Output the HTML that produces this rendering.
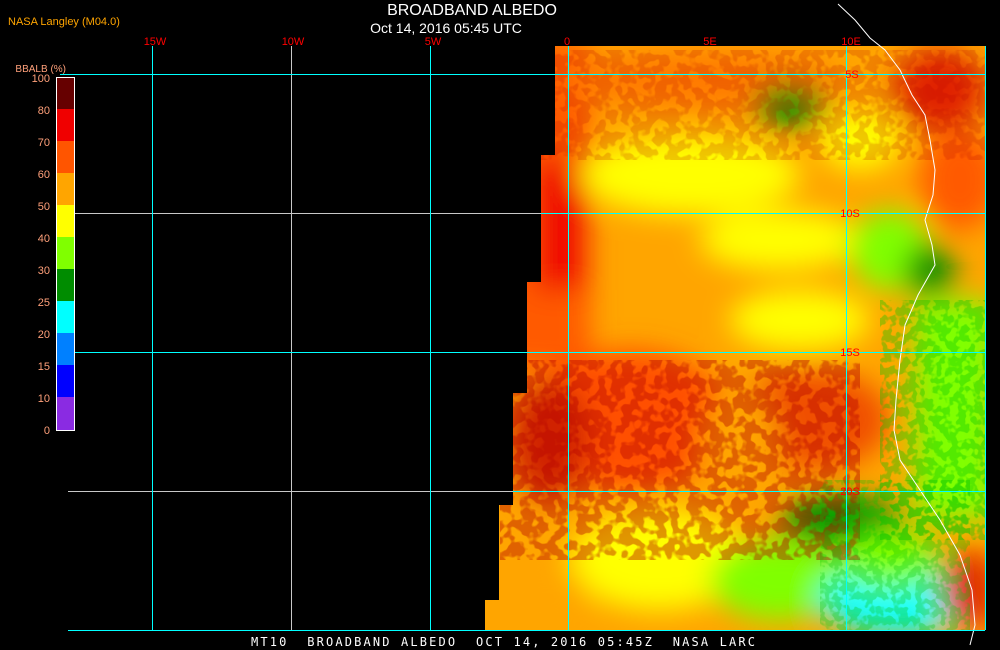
<!DOCTYPE html>
<html><head><meta charset="utf-8"><style>
html,body{margin:0;padding:0;background:#000;width:1000px;height:650px;overflow:hidden}
svg{display:block}
text{font-family:"Liberation Sans",sans-serif}
.m{font-family:"DejaVu Sans Mono","Liberation Mono",monospace}
</style></head><body>
<svg width="1000" height="650" viewBox="0 0 1000 650" xmlns="http://www.w3.org/2000/svg">
<defs>
<clipPath id="c"><polygon points="555,46 985,46 985,630 485,630 485,600 499,600 499,505 513,505 513,393 527,393 527,282 541,282 541,155 555,155"/></clipPath>
<filter id="b" x="-50%" y="-50%" width="200%" height="200%"><feGaussianBlur stdDeviation="14"/></filter>
<filter id="n" x="0" y="0" width="100%" height="100%">
<feTurbulence type="fractalNoise" baseFrequency="0.09" numOctaves="2" seed="3"/>
<feColorMatrix type="matrix" values="0 0 0 0 0.45  0 0 0 0 0  0 0 0 0 0  0 0 0 -9 5.2"/>
</filter>
<filter id="g" x="0" y="0" width="100%" height="100%">
<feTurbulence type="fractalNoise" baseFrequency="0.12" numOctaves="2" seed="8"/>
<feColorMatrix type="matrix" values="0 0 0 0 0  0 0 0 0 0.55  0 0 0 0 0  0 0 0 -10 5.6"/>
</filter>
</defs>
<rect width="1000" height="650" fill="#000"/>
<g clip-path="url(#c)">
<rect x="480" y="40" width="510" height="600" fill="#ffa500"/>
<g filter="url(#b)">
<rect x="480" y="40" width="110" height="330" fill="#ff5a00"/>
<rect x="535" y="160" width="50" height="130" fill="#f00000"/>
<ellipse cx="700" cy="80" rx="140" ry="28" fill="#ff7a00"/>
<ellipse cx="690" cy="175" rx="110" ry="40" fill="#ffff00"/>
<ellipse cx="780" cy="240" rx="80" ry="30" fill="#ffff00"/>
<ellipse cx="800" cy="320" rx="70" ry="30" fill="#ffff00"/>
<ellipse cx="790" cy="105" rx="35" ry="22" fill="#009000"/>
<ellipse cx="860" cy="140" rx="40" ry="30" fill="#ffff00"/>
<ellipse cx="960" cy="180" rx="40" ry="50" fill="#ff5a00"/>
<ellipse cx="940" cy="90" rx="45" ry="40" fill="#e02000"/>
<ellipse cx="890" cy="250" rx="40" ry="40" fill="#80ff00"/>
<ellipse cx="930" cy="270" rx="25" ry="25" fill="#009000"/>
<rect x="915" y="300" width="80" height="220" fill="#80ff00"/>
<ellipse cx="630" cy="420" rx="100" ry="70" fill="#ff5000"/>
<ellipse cx="550" cy="440" rx="40" ry="60" fill="#d02000"/>
<ellipse cx="810" cy="420" rx="80" ry="50" fill="#f05000"/>
<ellipse cx="740" cy="450" rx="40" ry="60" fill="#ffa500"/>
<ellipse cx="660" cy="560" rx="90" ry="50" fill="#ffff00"/>
<ellipse cx="780" cy="580" rx="70" ry="40" fill="#80ff00"/>
<ellipse cx="840" cy="520" rx="60" ry="25" fill="#009000"/>
<ellipse cx="900" cy="600" rx="80" ry="35" fill="#00ffff"/>
<ellipse cx="890" cy="560" rx="50" ry="30" fill="#80ff00"/>
<ellipse cx="540" cy="600" rx="50" ry="40" fill="#ffa500"/>
<ellipse cx="970" cy="590" rx="30" ry="40" fill="#e03000"/>
</g>
<rect x="500" y="360" width="360" height="200" filter="url(#n)" opacity="0.4"/>
<rect x="880" y="300" width="105" height="240" filter="url(#g)" opacity="0.35"/>
<rect x="820" y="480" width="150" height="150" filter="url(#g)" opacity="0.3"/>
<rect x="540" y="50" width="445" height="110" filter="url(#n)" opacity="0.2"/>
</g>
<polyline points="838,4 855,20 870,38 885,50 900,70 912,95 925,115 930,140 935,170 933,195 925,220 932,245 935,265 918,295 905,325 900,360 896,400 894,430 900,460 920,490 940,520 960,555 972,590 975,625 970,645" fill="none" stroke="#fff" stroke-width="1"/>
<g stroke-width="1" fill="none">
<line x1="75" y1="213.5" x2="541" y2="213.5" stroke="#c8c8c8"/>
<line x1="68" y1="491.5" x2="513" y2="491.5" stroke="#c8c8c8"/>
<line x1="291.5" y1="46" x2="291.5" y2="630" stroke="#c8c8c8"/>
<line x1="541" y1="213.5" x2="985" y2="213.5" stroke="#00ffff"/>
<line x1="513" y1="491.5" x2="985" y2="491.5" stroke="#00ffff"/>
<line x1="60" y1="74.5" x2="985" y2="74.5" stroke="#00ffff"/>
<line x1="75" y1="352.5" x2="985" y2="352.5" stroke="#00ffff"/>
<line x1="68" y1="630.5" x2="985" y2="630.5" stroke="#00ffff"/>
<line x1="152.5" y1="46" x2="152.5" y2="630" stroke="#00ffff"/>
<line x1="430.5" y1="46" x2="430.5" y2="630" stroke="#00ffff"/>
<line x1="568.5" y1="46" x2="568.5" y2="630" stroke="#00ffff"/>
<line x1="846.5" y1="46" x2="846.5" y2="630" stroke="#00ffff"/>
<line x1="985.5" y1="46" x2="985.5" y2="630" stroke="#00ffff"/>
</g>
<rect x="57" y="77" width="17" height="32" fill="#660000"/>
<rect x="57" y="109" width="17" height="32" fill="#f00000"/>
<rect x="57" y="141" width="17" height="32" fill="#ff5500"/>
<rect x="57" y="173" width="17" height="32" fill="#ffa500"/>
<rect x="57" y="205" width="17" height="32" fill="#ffff00"/>
<rect x="57" y="237" width="17" height="32" fill="#80ff00"/>
<rect x="57" y="269" width="17" height="32" fill="#008c00"/>
<rect x="57" y="301" width="17" height="32" fill="#00ffff"/>
<rect x="57" y="333" width="17" height="32" fill="#0080ff"/>
<rect x="57" y="365" width="17" height="32" fill="#0000ff"/>
<rect x="57" y="397" width="17" height="33" fill="#8a2be2"/>
<rect x="56.5" y="77.5" width="18" height="353" fill="none" stroke="#fff"/>
<g fill="#ffa07a" font-size="11" text-anchor="end">
<text x="50" y="82">100</text><text x="50" y="114">80</text><text x="50" y="146">70</text><text x="50" y="178">60</text><text x="50" y="210">50</text><text x="50" y="242">40</text><text x="50" y="274">30</text><text x="50" y="306">25</text><text x="50" y="338">20</text><text x="50" y="370">15</text><text x="50" y="402">10</text><text x="50" y="434">0</text>
<text x="66" y="72" text-anchor="end" font-size="10">BBALB (%)</text>
</g>
<text x="8" y="25" fill="#ffa500" font-size="11">NASA Langley (M04.0)</text>
<text x="472" y="15" fill="#fff" font-size="16" text-anchor="middle">BROADBAND ALBEDO</text>
<text x="446" y="33" fill="#fff" font-size="14" text-anchor="middle">Oct 14, 2016 05:45 UTC</text>
<g fill="#ff0000" font-size="11" class="m" text-anchor="middle">
<text x="155" y="45">15W</text><text x="293" y="45">10W</text><text x="433" y="45">5W</text><text x="567" y="45">0</text><text x="710" y="45">5E</text><text x="851" y="45">10E</text>
<text x="852" y="78">5S</text><text x="850" y="217">10S</text><text x="850" y="356">15S</text><text x="850" y="495">20S</text>
</g>
<text x="251" y="646" fill="#fff" font-size="12" class="m" xml:space="preserve" textLength="504">MT10  BROADBAND ALBEDO  OCT 14, 2016 05:45Z  NASA LARC</text>
</svg>
</body></html>
